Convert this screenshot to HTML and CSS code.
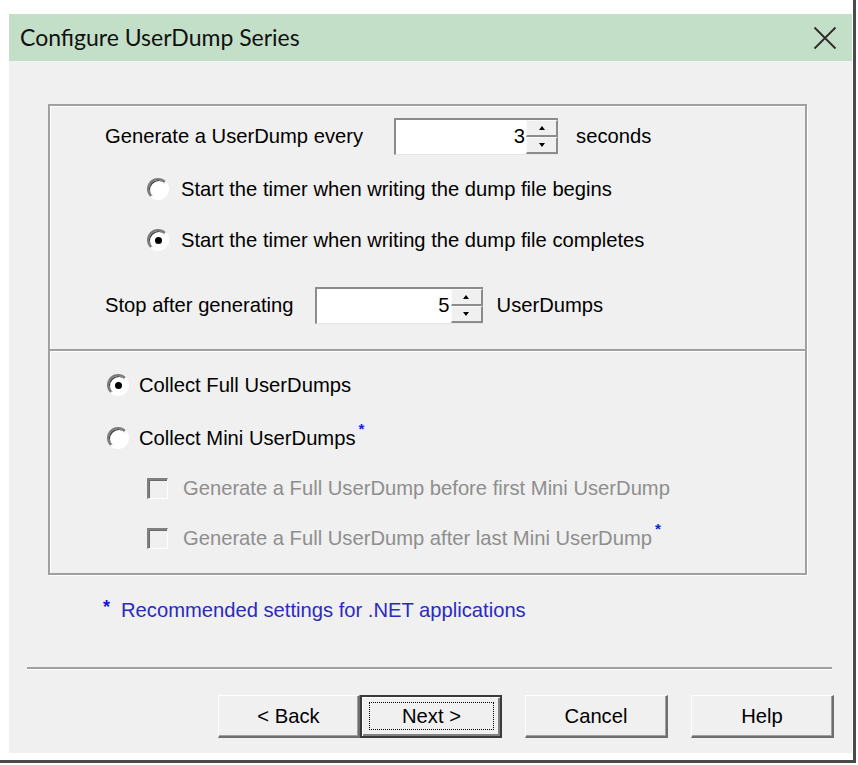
FILE: index.html
```html
<!DOCTYPE html>
<html>
<head>
<meta charset="utf-8">
<link rel="stylesheet" href="styles.css">
</head>
<body>
<div class="shot">
  <div class="dialog">
    <div class="titlebar">
      <span class="title">Configure UserDump Series</span>
      <svg class="close" width="24" height="24" viewBox="0 0 24 24"><path d="M1.5 1.5 L22.5 22.5 M22.5 1.5 L1.5 22.5" stroke="#2b2b2b" stroke-width="1.8" fill="none"/></svg>
    </div>
    <div class="content">
      <div class="group g1">
        <div class="row r-top">
          <span class="lbl">Generate a UserDump every</span>
          <div class="spin s1"><div class="field">3</div><div class="arrows"><div class="arr"><i class="tri up"></i></div><div class="arr"><i class="tri down"></i></div></div></div>
          <span class="lbl unit1">seconds</span>
        </div>
        <div class="opt sub o1"><span class="radio"></span><span class="lbl">Start the timer when writing the dump file begins</span></div>
        <div class="opt sub o2"><span class="radio on"></span><span class="lbl">Start the timer when writing the dump file completes</span></div>
        <div class="row r-stop">
          <span class="lbl">Stop after generating</span>
          <div class="spin s2"><div class="field">5</div><div class="arrows"><div class="arr"><i class="tri up"></i></div><div class="arr"><i class="tri down"></i></div></div></div>
          <span class="lbl unit2">UserDumps</span>
        </div>
      </div>
      <div class="group g2">
        <div class="opt main oa"><span class="radio on"></span><span class="lbl">Collect Full UserDumps</span></div>
        <div class="opt main ob"><span class="radio"></span><span class="lbl">Collect Mini UserDumps<sup class="star">*</sup></span></div>
        <div class="opt sub c1"><span class="check"></span><span class="lbl dis">Generate a Full UserDump before first Mini UserDump</span></div>
        <div class="opt sub c2"><span class="check"></span><span class="lbl dis">Generate a Full UserDump after last Mini UserDump<sup class="star">*</sup></span></div>
      </div>
      <div class="note"><span class="nstar">*</span><span>Recommended settings for .NET applications</span></div>
      <div class="sep"></div>
      <div class="buttons">
        <div class="btn back">&lt; Back</div>
        <div class="btn next default"><span class="focus">Next &gt;</span></div>
        <div class="btn cancel">Cancel</div>
        <div class="btn help">Help</div>
      </div>
    </div>
  </div>
</div>
</body>
</html>
```
FILE: styles.css
```css
html, body {
  margin: 0;
  padding: 0;
  background: #ffffff;
}
.shot {
  width: 844px;
  height: 743px;
  padding: 14px 0 3px 9px;
  border-right: 3px solid #4a4a4a;
  border-bottom: 3px solid #4a4a4a;
}
.dialog {
  width: 843px;
  height: 739px;
  background: #f0f0f0;
  display: flex;
  flex-direction: column;
  font-family: "Liberation Sans", Arial, sans-serif;
  font-size: 20.2px;
  color: #000;
}
.titlebar {
  height: 47px;
  background: #c4dfc8;
  display: flex;
  align-items: center;
  justify-content: space-between;
  padding: 0 15px 0 11px;
}
.title {
  font-family: "Lato", "Open Sans", sans-serif;
  font-size: 23px;
  color: #111;
  position: relative;
  top: -1px;
}
.close {
  display: block;
}
.content {
  display: flex;
  flex-direction: column;
}
.group {
  margin: 0 45px 0 39px;
  border: 2px solid #a0a0a0;
  box-shadow: inset 1px 1px 0 #fff, 1px 1px 0 #fff;
  display: flex;
  flex-direction: column;
}
.g1 {
  margin-top: 43px;
  padding: 12px 0 26px 0;
}
.g2 {
  border-top: 0;
  padding: 19px 0 20px 0;
}
.row {
  display: flex;
  align-items: center;
  height: 36px;
  padding-left: 55px;
}
.r-stop {
  margin-top: 32px;
}
.opt {
  display: flex;
  align-items: center;
  height: 30px;
}
.opt.sub {
  padding-left: 97px;
}
.opt.main {
  padding-left: 57px;
}
.o1 { margin-top: 20px; }
.o2 { margin-top: 21px; }
.ob { margin-top: 23px; }
.c1, .c2 { margin-top: 20px; }
.lbl {
  white-space: nowrap;
}
.sub .radio + .lbl { margin-left: 12px; }
.main .radio + .lbl { margin-left: 10px; }
.check + .lbl { margin-left: 15px; }
.dis {
  color: #8e8e8e;
}
.star {
  color: #0a1ee0;
  font-size: 15px;
  font-weight: bold;
  vertical-align: top;
  position: relative;
  top: -6px;
  margin-left: 3px;
  line-height: 1;
}
.spin {
  display: flex;
  box-sizing: border-box;
  height: 37px;
  border-top: 2px solid #8c8c8c;
  border-left: 2px solid #8c8c8c;
  border-bottom: 1px solid #e6e6e6;
}
.s1 { margin-left: 31px; }
.s2 { margin-left: 21px; }
.s1 .field { width: 130px; }
.s2 .field { width: 134px; }
.field {
  background: #fff;
  text-align: right;
  line-height: 33px;
  padding-right: 1px;
  box-sizing: border-box;
}
.arrows {
  width: 32px;
  display: flex;
  flex-direction: column;
}
.arr {
  flex: 1;
  background: #f0f0f0;
  border-style: solid;
  border-width: 1px 2px 2px 1px;
  border-color: #fafafa #8c8c8c #8c8c8c #fafafa;
  display: flex;
  align-items: center;
  justify-content: center;
}
.tri {
  width: 0;
  height: 0;
  border-left: 3px solid transparent;
  border-right: 3px solid transparent;
}
.tri.up { border-bottom: 4px solid #000; }
.tri.down { border-top: 4px solid #000; }
.unit1 { margin-left: 18px; }
.unit2 { margin-left: 14px; }
.radio {
  width: 22px;
  height: 22px;
  box-sizing: border-box;
  border-radius: 50%;
  border: 2px solid;
  border-color: #7a7a7a #ffffff #ffffff #7a7a7a;
  background: #fff;
  box-shadow: inset 1px 1px 0 #3c3c3c;
  display: flex;
  align-items: center;
  justify-content: center;
  flex: none;
}
.radio.on::after {
  content: "";
  width: 7px;
  height: 7px;
  border-radius: 50%;
  background: #000;
}
.check {
  width: 21px;
  height: 21px;
  box-sizing: border-box;
  border-style: solid;
  border-width: 2px 1px 1px 2px;
  border-color: #808080 #ffffff #ffffff #808080;
  box-shadow: inset 1px 1px 0 #6a6a6a;
  background: #f0f0f0;
  flex: none;
}
.note {
  margin: 20px 0 0 94px;
  height: 30px;
  display: flex;
  align-items: center;
  color: #2a2ac0;
}
.nstar {
  color: #1515d8;
  margin-right: 11px;
  font-size: 18px;
  font-weight: bold;
  position: relative;
  top: -3px;
}
.sep {
  margin: 42px 20px 0 18px;
  height: 2px;
  background: #a0a0a0;
  border-bottom: 1px solid #ffffff;
}
.buttons {
  margin-top: 25px;
  padding-right: 18px;
  display: flex;
  justify-content: flex-end;
}
.btn {
  box-sizing: border-box;
  height: 43px;
  width: 143px;
  background: #f0f0f0;
  border-style: solid;
  border-width: 1px 2px 2px 1px;
  border-color: #ffffff #6e6e6e #6e6e6e #ffffff;
  box-shadow: inset -1px -1px 0 #a0a0a0;
  display: flex;
  align-items: center;
  justify-content: center;
}
.back { width: 142px; }
.next {
  width: 142px;
  border: 2px solid #3a3a3a;
  box-shadow: inset 1px 1px 0 #fff, inset -2px -2px 0 #808080;
  padding: 5px 6px 6px 7px;
}
.focus {
  flex: 1;
  align-self: stretch;
  border: 1px dotted #000;
  display: flex;
  align-items: center;
  justify-content: center;
}
.cancel { margin-left: 23px; }
.help { margin-left: 23px; }
```
